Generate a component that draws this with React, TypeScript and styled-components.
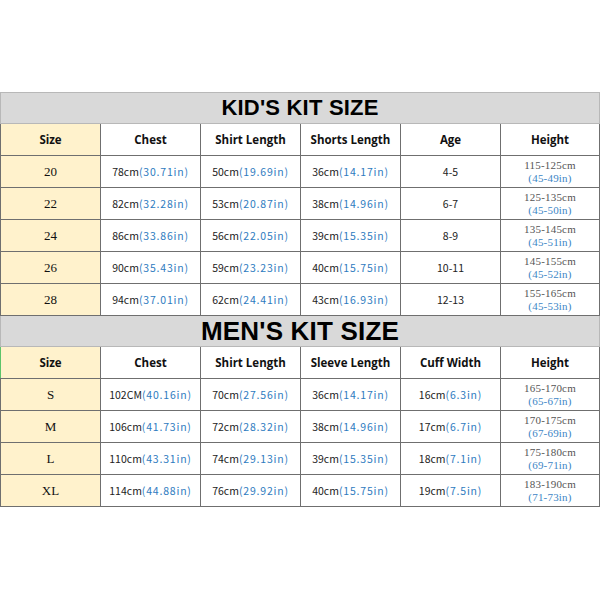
import React from "react";
import styled, { createGlobalStyle } from "styled-components";

const Global = createGlobalStyle`
  html, body { margin: 0; padding: 0; background: #ffffff; }
  body { font-family: "Liberation Sans", Arial, sans-serif; }
`;

const Page = styled.div`
  width: 600px;
  height: 600px;
  padding-top: 92px;
  box-sizing: border-box;
  background: #fff;
`;

const Table = styled.table`
  width: 599px;
  border-collapse: collapse;
  table-layout: fixed;
`;

const Col = styled.col<{ $w: number }>`
  width: ${(p) => p.$w}px;
`;

const TitleCell = styled.td<{ $size: number }>`
  height: 30px;
  padding: 0;
  background: #d9d9d9;
  border: 1px solid #b8b8b8;
  text-align: center;
  vertical-align: middle;
  font-family: "Liberation Sans", Arial, sans-serif;
  font-weight: 700;
  font-size: ${(p) => p.$size}px;
  line-height: 1;
  color: #000;
  letter-spacing: 0.2px;
`;

const HeadCell = styled.td<{ $yellow?: boolean; $green?: boolean }>`
  height: 31px;
  padding: 0;
  background: ${(p) => (p.$yellow ? "#fff2cc" : "#ffffff")};
  border: 1px solid #6f6f6f;
  ${(p) => (p.$green ? "border-left: 1px solid #5cc46a;" : "")}
  text-align: center;
  vertical-align: middle;
  font-family: "Open Sans", "Noto Sans", sans-serif;
  font-weight: 700;
  font-size: 11.5px;
  color: #111;
`;

const SizeCell = styled.td`
  height: 31px;
  padding: 0;
  background: #fff2cc;
  border: 1px solid #6f6f6f;
  text-align: center;
  vertical-align: middle;
  font-family: "Liberation Serif", "Noto Sans CJK SC", serif;
  font-size: 13px;
  color: #111;
`;

const DataCell = styled.td`
  height: 31px;
  padding: 0;
  background: #ffffff;
  border: 1px solid #6f6f6f;
  text-align: center;
  vertical-align: middle;
  font-family: "Noto Sans CJK SC", "Noto Sans", sans-serif;
  font-size: 10.5px;
  color: #222;
  white-space: nowrap;
`;

const Inch = styled.span`
  color: #2e7bc0;
  letter-spacing: 0.8px;
`;

const Metric = styled.span`
  color: #222;
`;

const HeightCell = styled.td`
  height: 31px;
  padding: 0;
  background: #ffffff;
  border: 1px solid #6f6f6f;
  text-align: center;
  vertical-align: middle;
  font-family: "Liberation Serif", "Noto Sans CJK SC", serif;
  font-size: 11px;
  line-height: 13px;
  color: #555;
  letter-spacing: 0.2px;
`;

const HeightInch = styled.div`
  color: #3d86c6;
`;

type Row = { size: string; cells: [string, string][]; age?: string; height: [string, string] };

const kidsHead = ["Size", "Chest", "Shirt Length", "Shorts Length", "Age", "Height"];
const menHead = ["Size", "Chest", "Shirt Length", "Sleeve Length", "Cuff Width", "Height"];
const widths = [100, 100, 100, 100, 100, 99];

const kids: Row[] = [
  { size: "20", cells: [["78cm", "30.71"], ["50cm", "19.69"], ["36cm", "14.17"]], age: "4-5", height: ["115-125cm", "(45-49in)"] },
  { size: "22", cells: [["82cm", "32.28"], ["53cm", "20.87"], ["38cm", "14.96"]], age: "6-7", height: ["125-135cm", "(45-50in)"] },
  { size: "24", cells: [["86cm", "33.86"], ["56cm", "22.05"], ["39cm", "15.35"]], age: "8-9", height: ["135-145cm", "(45-51in)"] },
  { size: "26", cells: [["90cm", "35.43"], ["59cm", "23.23"], ["40cm", "15.75"]], age: "10-11", height: ["145-155cm", "(45-52in)"] },
  { size: "28", cells: [["94cm", "37.01"], ["62cm", "24.41"], ["43cm", "16.93"]], age: "12-13", height: ["155-165cm", "(45-53in)"] },
];

const men: Row[] = [
  { size: "S", cells: [["102CM", "40.16"], ["70cm", "27.56"], ["36cm", "14.17"], ["16cm", "6.3"]], height: ["165-170cm", "(65-67in)"] },
  { size: "M", cells: [["106cm", "41.73"], ["72cm", "28.32"], ["38cm", "14.96"], ["17cm", "6.7"]], height: ["170-175cm", "(67-69in)"] },
  { size: "L", cells: [["110cm", "43.31"], ["74cm", "29.13"], ["39cm", "15.35"], ["18cm", "7.1"]], height: ["175-180cm", "(69-71in)"] },
  { size: "XL", cells: [["114cm", "44.88"], ["76cm", "29.92"], ["40cm", "15.75"], ["19cm", "7.5"]], height: ["183-190cm", "(71-73in)"] },
];

const Measure = ({ v }: { v: [string, string] }) => (
  <DataCell>
    <Metric>{v[0]}</Metric>
    <Inch>({v[1]}in)</Inch>
  </DataCell>
);

const Section = ({ title, size, head, rows, green }: { title: string; size: number; head: string[]; rows: Row[]; green?: boolean }) => (
  <>
    <tr>
      <TitleCell colSpan={6} $size={size}>{title}</TitleCell>
    </tr>
    <tr>
      {head.map((h, i) => (
        <HeadCell key={h} $yellow={i === 0} $green={green && i === 0}>{h}</HeadCell>
      ))}
    </tr>
    {rows.map((r) => (
      <tr key={r.size}>
        <SizeCell>{r.size}</SizeCell>
        {r.cells.map((c, i) => (
          <Measure key={i} v={c} />
        ))}
        {r.age !== undefined && <DataCell>{r.age}</DataCell>}
        <HeightCell>
          <div>{r.height[0]}</div>
          <HeightInch>{r.height[1]}</HeightInch>
        </HeightCell>
      </tr>
    ))}
  </>
);

export default function App() {
  return (
    <Page>
      <Global />
      <Table>
        <colgroup>
          {widths.map((w, i) => (
            <Col key={i} $w={w} />
          ))}
        </colgroup>
        <tbody>
          <Section title="KID'S KIT SIZE" size={22} head={kidsHead} rows={kids} />
          <Section title="MEN'S KIT SIZE" size={26} head={menHead} rows={men} green />
        </tbody>
      </Table>
    </Page>
  );
}
